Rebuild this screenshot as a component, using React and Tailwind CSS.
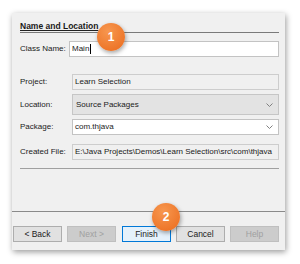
import React from "react";

function Chevron() {
  return (
    <svg width="7" height="4" viewBox="0 0 7 4" className="shrink-0">
      <polyline points="0.5,0.5 3.5,3.5 6.5,0.5" fill="none" stroke="#808080" strokeWidth="1" />
    </svg>
  );
}

function Badge({ n }) {
  return (
    <div className="absolute w-[28px] h-[28px] rounded-full bg-[radial-gradient(circle_at_40%_30%,#f7974f,#ea6a1c)] shadow-[1px_2px_4px_rgba(0,0,0,0.35)] flex items-center justify-center text-white font-bold text-[12px] leading-none">
      {n}
    </div>
  );
}

function Btn({ children, disabled, primary }) {
  let cls =
    "w-[49px] h-[16px] flex items-center justify-center text-[8.5px] leading-none border ";
  if (disabled) cls += "bg-[#cccccc] border-[#bfbfbf] text-[#a0a0a0]";
  else if (primary) cls += "bg-[#e5f1fb] border-[#0078d7] text-[#222]";
  else cls += "bg-[#e1e1e1] border-[#adadad] text-[#222]";
  return <div className={cls}>{children}</div>;
}

export default function App() {
  return (
    <div
      className="w-[300px] h-[264px] bg-white pt-[13px] pl-[12px] relative overflow-hidden"
      style={{ fontFamily: '"Liberation Sans", Arial, sans-serif' }}
    >
      <div className="w-[273px] h-[237px] bg-[#f0f0f0] shadow-[1px_2px_6px_rgba(0,0,0,0.4)] flex flex-col text-[8px] text-[#1a1a1a]">
        <div className="pl-[8px] pr-[6px] flex flex-col">
          <div className="mt-[8px] h-[12px] border-b border-[#7a7a7a] font-bold text-[8.5px] leading-[10px] underline decoration-[#222]">
            Name and Location
          </div>
          <div className="mt-[8px] h-[16px] flex items-center">
            <div className="w-[49px]">Class Name:</div>
            <div className="flex-1 h-full bg-white border border-[#c3c3c3] flex items-center pl-[2px]">
              Main<span className="inline-block w-px h-[10px] bg-black ml-px" />
            </div>
          </div>
          <div className="mt-[17px] h-[16px] flex items-center">
            <div className="w-[52px]">Project:</div>
            <div className="flex-1 h-full bg-[#f0f0f0] border border-[#cdcdcd] flex items-center pl-[2px]">
              Learn Selection
            </div>
          </div>
          <div className="mt-[4px] h-[21px] flex items-center">
            <div className="w-[52px]">Location:</div>
            <div className="flex-1 h-full bg-[#e3e3e3] border border-[#c6c6c6] flex items-center justify-between pl-[3px] pr-[5px]">
              <span>Source Packages</span>
              <Chevron />
            </div>
          </div>
          <div className="mt-[4px] h-[16px] flex items-center">
            <div className="w-[52px]">Package:</div>
            <div className="flex-1 h-full bg-white border border-[#c3c3c3] flex items-center justify-between pl-[2px] pr-[5px]">
              <span>com.thjava</span>
              <Chevron />
            </div>
          </div>
          <div className="mt-[9px] h-[16px] flex items-center">
            <div className="w-[52px]">Created File:</div>
            <div className="flex-1 h-full bg-[#f0f0f0] border border-[#cdcdcd] flex items-center pl-[2px] overflow-hidden whitespace-nowrap">
              E:\Java Projects\Demos\Learn Selection\src\com\thjava
            </div>
          </div>
          <div className="mt-[8px] h-px bg-[#a0a0a0]" />
        </div>
        <div className="mt-[42px] h-px bg-[#8a8a8a]" />
        <div className="mt-[14px] pl-[1px] flex gap-[5px]">
          <Btn>&lt; Back</Btn>
          <Btn disabled>Next &gt;</Btn>
          <div className="ml-[1px]">
            <Btn primary>Finish</Btn>
          </div>
          <Btn>Cancel</Btn>
          <Btn disabled>Help</Btn>
        </div>
      </div>
      <div className="absolute left-[97px] top-[23px]">
        <div className="relative">
          <Badge n="1" />
        </div>
      </div>
      <div className="absolute left-[152px] top-[203px]">
        <div className="relative">
          <Badge n="2" />
        </div>
      </div>
    </div>
  );
}
